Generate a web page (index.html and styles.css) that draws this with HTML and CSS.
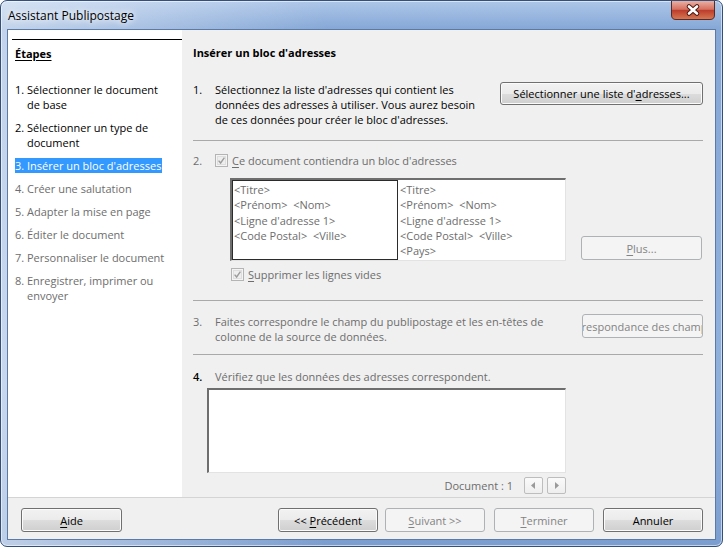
FILE: index.html
```html
<!DOCTYPE html>
<html>
  <head>
    <meta name="viewport" content="width=device-width, initial-scale=1.0">
    <title>Assistant Publipostage</title>
    <link rel="stylesheet" href="styles.css">
  </head>
  <body>
    <div class="window">
      <div class="titlebar">
        <span class="title">Assistant Publipostage</span>
        <span class="close">
          <svg width="44" height="19" viewBox="0 0 44 19">
            <defs>
              <linearGradient id="closeGrad" x1="0" y1="0" x2="0" y2="1">
                <stop offset="0" stop-color="#eab0a4"/>
                <stop offset="0.45" stop-color="#d5705f"/>
                <stop offset="0.5" stop-color="#bd3d2c"/>
                <stop offset="1" stop-color="#d67a55"/>
              </linearGradient>
            </defs>
            <path d="M0.5 0 V14 Q0.5 18.5 5 18.5 H39 Q43.5 18.5 43.5 14 V0" fill="url(#closeGrad)" stroke="#5b2a22"/>
            <path d="M18 5.5 L26 12.5 M26 5.5 L18 12.5" stroke="#4a1a14" stroke-width="4.6" stroke-linecap="round"/>
            <path d="M18 5.5 L26 12.5 M26 5.5 L18 12.5" stroke="#fff" stroke-width="2.6" stroke-linecap="round"/>
          </svg>
        </span>
      </div>

      <div class="client">
        <div class="main">
          <div class="steps">
            <div class="steps-rule"></div>
            <div class="steps-title">Étapes</div>
            <div class="step-list">
              <div class="step"><span class="n">1.</span><span>Sélectionner le document<br>de base</span></div>
              <div class="step"><span class="n">2.</span><span>Sélectionner un type de<br>document</span></div>
              <div class="step current"><span class="n">3.</span><span>Insérer un bloc d'adresses</span></div>
              <div class="step off"><span class="n">4.</span><span>Créer une salutation</span></div>
              <div class="step off"><span class="n">5.</span><span>Adapter la mise en page</span></div>
              <div class="step off"><span class="n">6.</span><span>Éditer le document</span></div>
              <div class="step off"><span class="n">7.</span><span>Personnaliser le document</span></div>
              <div class="step off"><span class="n">8.</span><span>Enregistrer, imprimer ou<br>envoyer</span></div>
            </div>
          </div>

          <div class="page">
            <div class="page-title">Insérer un bloc d'adresses</div>

            <div class="sec sec1">
              <span class="num">1.</span>
              <div class="sec-text">Sélectionnez la liste d'adresses qui contient les<br>données des adresses à utiliser. Vous aurez besoin<br>de ces données pour créer le bloc d'adresses.</div>
              <button class="btn btn-list">Sélectionner une liste d'<u>a</u>dresses...</button>
            </div>

            <div class="sep sep1"></div>

            <div class="sec sec2 off">
              <span class="num">2.</span>
              <span class="cb">
                <svg width="13" height="13" viewBox="0 0 13 13">
                  <rect x="0.5" y="0.5" width="12" height="12" fill="#f4f4f4" stroke="#b4b4b4"/>
                  <rect x="2.5" y="2.5" width="8" height="8" fill="#eeeeee" stroke="#dedede"/>
                  <path d="M3.6 6.6 L5.6 9 L9.4 3.6" fill="none" stroke="#9c9c9c" stroke-width="1.4"/>
                </svg>
              </span>
              <span><u>C</u>e document contiendra un bloc d'adresses</span>
            </div>

            <div class="addr-row">
              <div class="addr">
                <div class="addr-col addr-sel">&lt;Titre&gt;<br>&lt;Prénom&gt;&nbsp; &lt;Nom&gt;<br>&lt;Ligne d'adresse 1&gt;<br>&lt;Code Postal&gt;&nbsp; &lt;Ville&gt;</div>
                <div class="addr-col">&lt;Titre&gt;<br>&lt;Prénom&gt;&nbsp; &lt;Nom&gt;<br>&lt;Ligne d'adresse 1&gt;<br>&lt;Code Postal&gt;&nbsp; &lt;Ville&gt;<br>&lt;Pays&gt;</div>
              </div>
              <button class="btn off btn-plus"><span><u>P</u>lus...</span></button>
            </div>

            <div class="check2 off">
              <span class="cb">
                <svg width="13" height="13" viewBox="0 0 13 13">
                  <rect x="0.5" y="0.5" width="12" height="12" fill="#f4f4f4" stroke="#b4b4b4"/>
                  <rect x="2.5" y="2.5" width="8" height="8" fill="#eeeeee" stroke="#dedede"/>
                  <path d="M3.6 6.6 L5.6 9 L9.4 3.6" fill="none" stroke="#9c9c9c" stroke-width="1.4"/>
                </svg>
              </span>
              <span><u>S</u>upprimer les lignes vides</span>
            </div>

            <div class="sep sep2"></div>

            <div class="sec sec3 off">
              <span class="num">3.</span>
              <div class="sec-text">Faites correspondre le champ du publipostage et les en-têtes de<br>colonne de la source de données.</div>
              <button class="btn off btn-match"><span>Correspondance des champs...</span></button>
            </div>

            <div class="sep sep3"></div>

            <div class="sec sec4">
              <span class="num num-dark">4.</span>
              <span class="off">Vérifiez que les données des adresses correspondent.</span>
            </div>

            <div class="preview"></div>

            <div class="doc-row">
              <span class="off">Document : 1</span>
              <span class="nav nav-first">
                <svg width="17" height="15" viewBox="0 0 17 15"><path d="M6 7.5 L10 4 V11 Z" fill="#9a9a9a"/></svg>
              </span>
              <span class="nav">
                <svg width="17" height="15" viewBox="0 0 17 15"><path d="M11 7.5 L7 4 V11 Z" fill="#9a9a9a"/></svg>
              </span>
            </div>
          </div>
        </div>

        <div class="footer">
          <button class="btn fbtn"><span><u>A</u>ide</span></button>
          <button class="btn fbtn btn-prev"><span>&lt;&lt; <u>P</u>récédent</span></button>
          <button class="btn off fbtn"><span><u>S</u>uivant &gt;&gt;</span></button>
          <button class="btn off fbtn"><span><u>T</u>erminer</span></button>
          <button class="btn fbtn"><span>Annuler</span></button>
        </div>
      </div>
    </div>
  </body>
</html>
```

FILE: styles.css
```css
* {
  box-sizing: border-box;
}
body {
  margin: 0;
  width: 723px;
  height: 547px;
  overflow: hidden;
  background-color: #ffffff;
  font-family: "Open Sans", "Noto Sans", sans-serif;
  font-size: 11px;
  line-height: 15px;
  color: #000000;
}
u {
  text-decoration-thickness: 1px;
  text-underline-offset: 2px;
}
.window {
  width: 723px;
  height: 547px;
  border: 1px solid #34507a;
  border-radius: 7px;
  padding: 0 6px 6px 6px;
  display: flex;
  flex-direction: column;
  background:
    linear-gradient(to right, rgba(255, 255, 255, 0.5), rgba(255, 255, 255, 0) 45%),
    linear-gradient(#adc6e8, #86a8d7 28px, #90b0dc 70%, #7b9ed0);
  box-shadow: inset 0 0 0 1px rgba(255, 255, 255, 0.55);
}
.titlebar {
  height: 28px;
  display: flex;
  justify-content: space-between;
  align-items: flex-start;
}
.title {
  padding: 7px 0 0 1px;
  font-size: 12px;
  color: #000000;
  text-shadow: 0 0 6px #ffffff, 0 0 10px #ffffff;
}
.close {
  display: flex;
  margin-right: 1px;
}
.client {
  flex: 1;
  border: 1px solid #5b7aa6;
  background-color: #f0f0f0;
  display: flex;
  flex-direction: column;
}
.main {
  height: 467px;
  display: flex;
}

/* left column */
.steps {
  width: 174px;
  flex: none;
  background-color: #ffffff;
  padding-top: 9px;
}
.steps-rule {
  margin-left: 4px;
  border-top: 1px solid #000000;
}
.steps-title {
  margin: 6px 0 0 7px;
  font-weight: bold;
  text-decoration: underline;
  text-underline-offset: 2px;
}
.step-list {
  margin-top: 21px;
  padding-left: 7px;
  display: flex;
  flex-direction: column;
  align-items: flex-start;
  gap: 8px;
}
.step {
  display: flex;
}
.step .n {
  width: 12px;
  flex: none;
}
.step.current {
  background-color: #3399ff;
  color: #ffffff;
  padding-right: 1px;
}
.off {
  color: #6d6d6d;
}

/* right column */
.page {
  flex: 1;
  padding: 15px 12px 0 11px;
}
.page-title {
  font-weight: bold;
}
.sec {
  display: flex;
  align-items: flex-start;
}
.num {
  width: 22px;
  flex: none;
}
.num-dark {
  color: #000000;
  font-weight: 600;
}
.sec-text {
  flex: 1;
}
.btn {
  margin: 0;
  padding: 0;
  height: 23px;
  font: inherit;
  color: #000000;
  border: 1px solid #707070;
  border-radius: 3px;
  background: linear-gradient(#f2f2f2 0%, #ebebeb 50%, #dddddd 50%, #cfcfcf 100%);
  box-shadow: inset 0 0 0 1px #fbfbfb;
  display: flex;
  align-items: center;
  justify-content: center;
  white-space: nowrap;
  overflow: hidden;
}
.btn.off {
  color: #838383;
  border-color: #adb2b5;
  background: #f4f4f4;
  box-shadow: none;
}
.sec1 {
  margin-top: 22px;
}
.btn-list {
  width: 203px;
}
.sep {
  border-top: 1px solid #a9a9a9;
}
.sep1 {
  margin-top: 13px;
}
.sec2 {
  margin-top: 12px;
  align-items: center;
}
.cb {
  display: flex;
  margin-right: 4px;
}
.addr-row {
  margin: 10px 0 0 37px;
  display: flex;
  align-items: flex-end;
}
.addr {
  width: 336px;
  height: 83px;
  background-color: #ffffff;
  border-style: solid;
  border-width: 2px 1px 1px 2px;
  border-color: #6e6e6e #e3e3e3 #e3e3e3 #6e6e6e;
  display: flex;
  color: #6d6d6d;
  line-height: 15.25px;
}
.addr-col {
  padding: 2px 0 0 2px;
  white-space: nowrap;
}
.addr-sel {
  width: 166px;
  border: 1px solid #2b2b2b;
  padding: 1px 0 0 1px;
}
.btn-plus {
  width: 121px;
  height: 24px;
  margin: 0 0 1px 15px;
}
.check2 {
  margin: 6px 0 0 38px;
  display: flex;
  align-items: center;
}
.sep2 {
  margin-top: 18px;
}
.sec3 {
  margin-top: 13px;
}
.btn-match {
  width: 121px;
  height: 24px;
}
.sep3 {
  margin-top: 10px;
}
.sec4 {
  margin-top: 14px;
}
.preview {
  margin: 4px 0 0 14px;
  width: 359px;
  height: 85px;
  background-color: #ffffff;
  border-style: solid;
  border-width: 2px 1px 1px 2px;
  border-color: #6e6e6e #e3e3e3 #e3e3e3 #6e6e6e;
}
.doc-row {
  margin-top: 4px;
  width: 373px;
  height: 17px;
  display: flex;
  justify-content: flex-end;
  align-items: center;
}
.nav {
  width: 19px;
  height: 17px;
  margin-left: 4px;
  border: 1px solid #bdbdbd;
  border-radius: 2px;
  background: linear-gradient(#fafafa, #eeeeee);
  display: flex;
}
.nav-first {
  margin-left: 11px;
}

/* bottom buttons */
.footer {
  flex: 1;
  border-top: 1px solid #d4d4d4;
  padding: 10px 12px 0 13px;
  display: flex;
  align-items: flex-start;
}
.fbtn {
  width: 100px;
  height: 24px;
  margin-left: 9px;
}
.fbtn:first-child {
  width: 101px;
  margin-left: 0;
  margin-right: auto;
}
.btn-prev {
  margin-right: -2px;
}
```
